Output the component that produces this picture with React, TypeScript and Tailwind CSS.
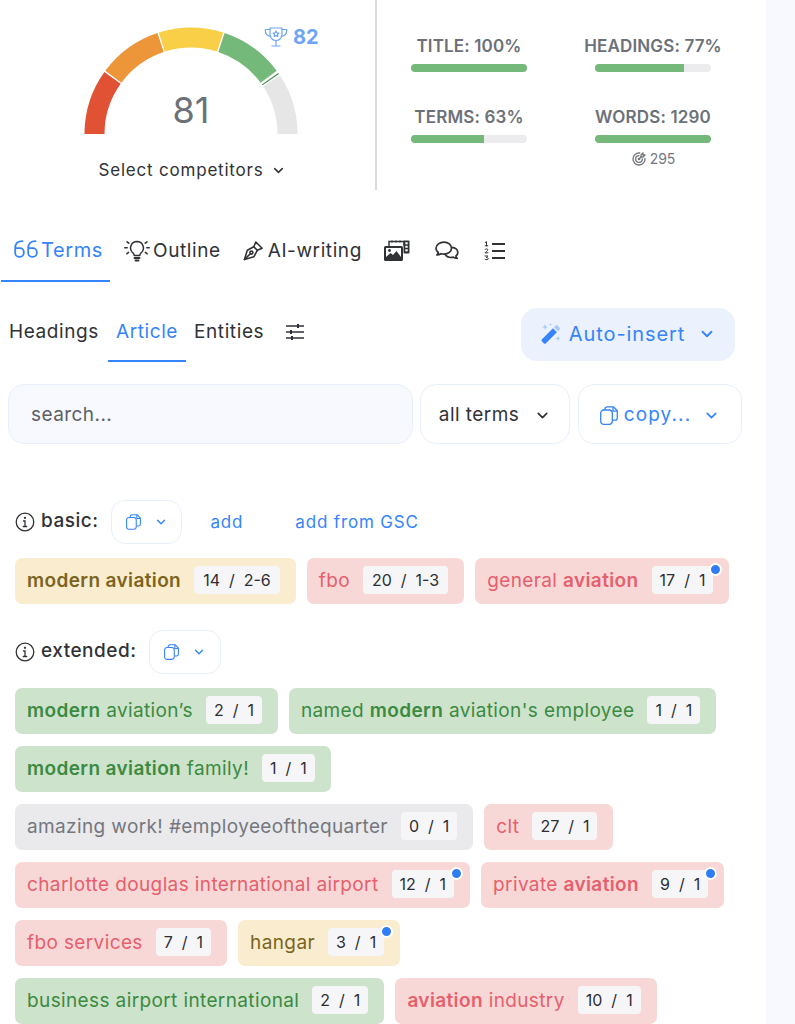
import React from 'react';
import { ChevronDown } from 'lucide-react';
import { TbTargetArrow } from 'react-icons/tb';

type Tone = 'yellow' | 'red' | 'green' | 'grey';

const toneClass: Record<Tone, string> = {
  yellow: 'bg-[#faecce] text-[#7a6420]',
  red: 'bg-[#f8d7d7] text-[#e5606c]',
  green: 'bg-[#cde3cb] text-[#3b8a41]',
  grey: 'bg-[#eaeaec] text-[#74777e]',
};

function polar(r: number, deg: number) {
  const a = (deg * Math.PI) / 180;
  return `${(110 + r * Math.cos(a)).toFixed(2)} ${(110 - r * Math.sin(a)).toFixed(2)}`;
}

function arc(from: number, to: number) {
  const R = 106.5;
  const r = 86.5;
  return `M${polar(R, from)} A${R} ${R} 0 0 1 ${polar(R, to)} L${polar(r, to)} A${r} ${r} 0 0 0 ${polar(r, from)} Z`;
}

function Gauge() {
  return (
    <svg width="220" height="110" viewBox="0 0 220 110" className="block">
      <path d={arc(180, 144.4)} fill="#e05233" />
      <path d={arc(143.6, 108.4)} fill="#ec9539" />
      <path d={arc(107.6, 72.4)} fill="#f9cf47" />
      <path d={arc(71.6, 36.4)} fill="#74b87a" />
      <path d={arc(33.4, 0)} fill="#e6e6e6" />
      <path d={`M${polar(106.5, 34.6)} L${polar(86.5, 34.6)}`} stroke="#3b8a41" strokeWidth="1.2" />
    </svg>
  );
}

function Trophy() {
  return (
    <svg width="24" height="20" viewBox="0 0 24 20" fill="none" stroke="#6ea5f5" strokeWidth="1.2" strokeLinejoin="round" strokeLinecap="round">
      <path d="M6 1h12v6.500a6 6 0 0 1-12 0z" />
      <path d="M6 2.500H1.200c0 4 1.800 6.500 5.600 7M18 2.500h4.800c0 4-1.800 6.500-5.600 7" />
      <path d="M12 13.500V18M8 19h8" />
      <path d="M12 4l.9 1.800 2 .3-1.400 1.400.3 2-1.800-.9-1.800.9.3-2-1.400-1.400 2-.3z" />
    </svg>
  );
}

function CopyIcon({ size = 18 }: { size?: number }) {
  return (
    <svg width={size} height={size + 1} viewBox="0 0 18 19" fill="none" stroke="#3584fb" strokeWidth="1.3" strokeLinejoin="round">
      <rect x="0.700" y="4" width="11.600" height="14.300" rx="3" />
      <path d="M5 4V3a2.200 2.200 0 0 1 2.200-2.200h6.100l4 4V12a2.200 2.200 0 0 1-2.200 2.200h-2.800" />
      <path d="M13 1v4.200h4.200" />
    </svg>
  );
}

function QuoteIcon() {
  return (
    <svg width="24" height="18" viewBox="0 0 24 18" fill="none" stroke="#3584fb" strokeWidth="1.800" strokeLinejoin="round" strokeLinecap="round">
      <path d="M8.500 1.200C4 1.200 1.200 3.500 1.200 8v5a3.800 3.800 0 0 0 3.800 3.800h1A3.800 3.800 0 0 0 9.800 13v-1a3.800 3.800 0 0 0-3.800-3.800H1.200" />
      <path d="M21.500 1.200c-4.500 0-7.300 2.300-7.300 6.800v5a3.800 3.800 0 0 0 3.800 3.800h1a3.800 3.800 0 0 0 3.800-3.800v-1a3.800 3.800 0 0 0-3.800-3.800h-4.800" />
    </svg>
  );
}

function BulbIcon() {
  return (
    <svg width="26" height="22" viewBox="0 0 26 22" fill="none" stroke="#303236" strokeWidth="1.500" strokeLinecap="round" strokeLinejoin="round">
      <path d="M13 1.500a6.500 6.500 0 0 0-3.800 11.700c.7.6 1 1.300 1 2.300h5.600c0-1 .3-1.700 1-2.300A6.500 6.500 0 0 0 13 1.500z" />
      <path d="M10.500 18h5M11.500 20.500h3" strokeWidth="1.900" />
      <path d="M3 1.800l1.800 1.400M.8 7.800h2.400M2.800 13.800l1.800-1.400M23 1.800l-1.800 1.400M25.200 7.800h-2.400M23.200 13.800l-1.800-1.400" />
    </svg>
  );
}

function PenIcon() {
  return (
    <svg width="21" height="21" viewBox="0 0 21 21" fill="none" stroke="#303236" strokeWidth="1.600" strokeLinejoin="round" strokeLinecap="round">
      <path d="M1.500 19.500l2.800-9.300 6.500-3.400 3.500 3.500-3.400 6.500z" />
      <path d="M1.500 19.500l5.800-5.800" />
      <circle cx="8.400" cy="12.600" r="1.500" />
      <path d="M10.800 6.800l2-4.800 6.300 6.300-4.800 2" />
    </svg>
  );
}

function MediaIcon() {
  return (
    <svg width="26" height="21" viewBox="0 0 26 21" className="block">
      <path d="M5 6V1.500h15v4" fill="none" stroke="#303236" strokeWidth="1.400" />
      <path d="M8 .5v2M12 .5v2M16 .5v2" stroke="#303236" strokeWidth="1.200" />
      <rect x="19.500" y="0.500" width="6" height="13" rx="1" fill="#303236" />
      <rect x="21.300" y="2.300" width="2.400" height="2" fill="#fff" />
      <rect x="21.300" y="5.800" width="2.400" height="2" fill="#fff" />
      <rect x="21.300" y="9.300" width="2.400" height="2" fill="#fff" />
      <rect x="0" y="6" width="19" height="15" rx="1.500" fill="#303236" />
      <rect x="2" y="8" width="15" height="9" fill="#fff" />
      <circle cx="5.500" cy="10.500" r="1.400" fill="#303236" />
      <path d="M2 17l4.500-4 2.500 2 3.500-4 4.500 6z" fill="#303236" />
    </svg>
  );
}

function ChatIcon() {
  return (
    <svg width="24" height="20" viewBox="0 0 24 20" fill="none" stroke="#303236" strokeWidth="1.700" strokeLinejoin="round" strokeLinecap="round">
      <path d="M9 1.200c-4.300 0-8 2.500-8 6 0 1.700.9 3.200 2.300 4.300-.2 1-.8 1.800-1.500 2.500 1.700 0 3.100-.5 4.200-1.300 1 .3 1.900.4 3 .4 4.300 0 7.500-2.500 7.500-5.900s-3.200-6-7.500-6z" />
      <path d="M16.800 6.400c3.400.3 6 2.300 6 5 0 1.500-.7 2.700-1.900 3.600.1.900.6 1.700 1.300 2.400-1.600 0-2.900-.4-3.900-1.200-2.800.6-6.500-.1-8-2.600" />
    </svg>
  );
}

function ListIcon() {
  return (
    <svg width="21" height="20" viewBox="0 0 21 20" fill="none" stroke="#303236" strokeLinecap="round">
      <path d="M8 3h13M8 10h13M8 17h13" strokeWidth="1.900" strokeLinecap="butt" />
      <path d="M1.200 1.500l1.300-.8v4.100M1.200 4.800h2.600" strokeWidth="1" />
      <path d="M1 8.500c.5-1 2.800-1 2.800.3 0 1-1.800 1.700-2.800 3h3" strokeWidth="1" />
      <path d="M1 15h2.800L2.200 16.600c1.600-.2 2 .6 2 1.200 0 1-2.200 1.300-3.200.5" strokeWidth="1" />
    </svg>
  );
}

function SlidersIcon() {
  return (
    <svg width="18" height="18" viewBox="0 0 18 18" fill="none" stroke="#303236" strokeWidth="1.400">
      <path d="M0 3h18M0 9h18M0 15h18" />
      <path d="M12 1v4M5 7v4M6 13v4" strokeWidth="2" />
    </svg>
  );
}

function WandIcon() {
  return (
    <svg width="22" height="22" viewBox="0 0 22 22">
      <path d="M1.800 16.500L13 5.300l3.900 3.900L5.700 20.400a1.200 1.200 0 0 1-1.700 0l-2.200-2.200a1.200 1.200 0 0 1 0-1.700z" fill="#3584fb" />
      <path d="M14 4.300l1.800-1.800a1.200 1.200 0 0 1 1.700 0l2.200 2.200a1.200 1.200 0 0 1 0 1.700l-1.800 1.800z" fill="#a9c8fa" />
      <path d="M5 1l.8 2.200L8 4l-2.200.8L5 7l-.8-2.200L2 4l2.200-.8zM10.500 0l.4 1.100 1.100.4-1.100.4-.4 1.100-.4-1.100L9 1.500l1.100-.4zM18 13l.7 1.800 1.800.7-1.800.7L18 18l-.7-1.800-1.800-.7 1.800-.7z" fill="#a9c8fa" />
    </svg>
  );
}

function InfoIcon() {
  return (
    <svg width="20" height="20" viewBox="0 0 20 20" fill="none" stroke="#303236" strokeWidth="1.300" strokeLinecap="round">
      <circle cx="10" cy="10" r="8.800" />
      <path d="M8.500 9h1.500v5.500M8.300 14.500h3.400" />
      <circle cx="10" cy="5.800" r="0.500" fill="#303236" />
    </svg>
  );
}

function Stat({ label, pct, extra }: { label: string; pct: number; extra?: React.ReactNode }) {
  return (
    <div className="flex flex-col items-center w-[116px]">
      <div className="text-[17px] leading-[20px] font-semibold tracking-[0.15px] text-[#6c7178] whitespace-nowrap">{label}</div>
      <div className="mt-[8px] h-[8px] w-full rounded-full bg-[#ececee] overflow-hidden">
        <div className="h-full bg-[#74b87a]" style={{ width: `${pct}%` }} />
      </div>
      {extra}
    </div>
  );
}

function CountChip({ text, dot, wide }: { text: string; dot?: boolean; wide?: boolean }) {
  return (
    <span className={`relative mb-[2px] ml-[13px] flex h-[28px] items-center rounded-[4px] bg-[#f6f6f8] pb-[1px] text-[16px] tracking-normal whitespace-pre text-[#2c2e33] ${wide ? 'px-[9px]' : 'px-[8px]'}`}>
      {text}
      {dot && (
        <span className="absolute -right-[9px] -top-[3px] size-[13px] rounded-full border-[2px] border-white bg-[#2f7df6]" />
      )}
    </span>
  );
}

function Term({ tone, count, dot, wide, children }: { tone: Tone; count: string; dot?: boolean; wide?: boolean; children: React.ReactNode }) {
  return (
    <div className={`flex h-[46px] items-center rounded-[7px] pl-[12px] pr-[16px] text-[19px] tracking-[0.38px] whitespace-nowrap ${toneClass[tone]}`}>
      <span>{children}</span>
      <CountChip text={count} dot={dot} wide={wide} />
    </div>
  );
}

function SmallCopy({ className }: { className: string }) {
  return (
    <button className={`flex h-[44px] w-[71px] items-center justify-center gap-[13px] rounded-[14px] border border-[#e8effc] bg-white ${className}`}>
      <CopyIcon size={15} />
      <ChevronDown size={14} strokeWidth={2.4} color="#3584fb" />
    </button>
  );
}

export default function App() {
  return (
    <div className="flex h-[1024px] w-[795px] overflow-hidden bg-white font-['Inter',sans-serif] text-[#303236]">
      <div className="w-[766px] shrink-0">
        {/* score header */}
        <div className="flex h-[190px]">
          <div className="w-[377px] shrink-0 border-r-2 border-[#d8dada] pt-[24px]">
            <div className="relative ml-[81px] h-[110px] w-[220px]">
              <Gauge />
              <div className="absolute bottom-[2px] left-0 right-0 text-center text-[36px] leading-[44px] text-[#6c7178]">81</div>
              <div className="absolute left-[183px] -top-[2px] flex items-center gap-[5px]">
                <Trophy />
                <span className="text-[20px] font-bold text-[#6ea5f5]">82</span>
              </div>
            </div>
            <div className="mt-[25px] flex items-center justify-center gap-[7px] pl-[9px] text-[17px] leading-[22px] tracking-[0.8px]">
              Select competitors
              <ChevronDown size={15} strokeWidth={2.4} />
            </div>
          </div>
          <div className="grid grid-cols-[116px_116px] grid-rows-[71px_auto] gap-x-[68px] pl-[34px] pt-[36px] content-start">
            <Stat label="TITLE: 100%" pct={100} />
            <Stat label="HEADINGS: 77%" pct={77} />
            <Stat label="TERMS: 63%" pct={63} />
            <Stat
              label="WORDS: 1290"
              pct={100}
              extra={
                <div className="mt-[7px] flex items-center gap-[3px] text-[14px] leading-[18px] text-[#74777e]">
                  <TbTargetArrow size={16} />
                  295
                </div>
              }
            />
          </div>
        </div>

        {/* main tabs */}
        <div className="mt-[30px] flex h-[62px] pl-[1px] text-[19px] tracking-[0.6px]">
          <div className="flex h-full w-[109px] items-start gap-[3px] border-b-2 border-[#3584fb] pl-[13px] pt-[20px] text-[20px] text-[#3584fb]">
            <QuoteIcon />
            <span className="leading-[21px]">Terms</span>
          </div>
          <div className="ml-[14px] flex items-start gap-[3px] pt-[20px]">
            <BulbIcon />
            <span className="leading-[21px]">Outline</span>
          </div>
          <div className="ml-[22px] flex items-start gap-[4px] pt-[20px]">
            <PenIcon />
            <span className="leading-[21px]">AI-writing</span>
          </div>
          <div className="ml-[22px] flex items-start pt-[20px]">
            <MediaIcon />
          </div>
          <div className="ml-[25px] flex items-start pt-[21px]">
            <ChatIcon />
          </div>
          <div className="ml-[25px] flex items-start pt-[21px]">
            <ListIcon />
          </div>
        </div>

        {/* article sub-tabs */}
        <div className="mt-[26px] flex h-[54px] items-start pl-[9px] pr-[31px] text-[19px] tracking-[0.6px]">
          <span className="pt-[13px] leading-[22px]">Headings</span>
          <span className="ml-[9px] h-full w-[78px] border-b-2 border-[#3584fb] pt-[13px] text-center leading-[22px] text-[#3584fb]">Article</span>
          <span className="ml-[8px] pt-[13px] leading-[22px]">Entities</span>
          <span className="ml-[22px] pt-[15px]">
            <SlidersIcon />
          </span>
          <button className="ml-auto flex h-[53px] w-[214px] items-center justify-center gap-[7px] rounded-[16px] bg-[#ebf1fd] pb-[1px] text-[20px] tracking-[0.9px] text-[#3584fb]">
            <WandIcon />
            Auto-insert
            <ChevronDown size={18} strokeWidth={2.4} className="ml-[6px]" />
          </button>
        </div>

        {/* search row */}
        <div className="mt-[22px] flex h-[60px] gap-[7px] pl-[8px] text-[19px] tracking-[0.44px]">
          <div className="flex w-[405px] items-center rounded-[16px] border border-[#e8effc] bg-[#f8f9fe] pl-[22px] pt-[2px] text-[#5c5f66]">search...</div>
          <button className="flex w-[150px] items-center justify-center gap-[15px] rounded-[16px] border border-[#e8effc] bg-white pt-[2px]">
            all terms
            <ChevronDown size={17} strokeWidth={2.4} />
          </button>
          <button className="ml-[1px] flex w-[164px] items-center justify-center gap-[6px] rounded-[16px] border border-[#e8effc] bg-white pt-[2px] tracking-[1.1px] text-[#3584fb]">
            <CopyIcon size={18} />
            copy...
            <ChevronDown size={17} strokeWidth={2.4} className="ml-[6px]" />
          </button>
        </div>

        {/* basic terms */}
        <div className="mt-[56px] flex h-[44px] items-center pl-[15px] text-[#3584fb]">
          <InfoIcon />
          <span className="ml-[6px] pb-[2px] text-[19px] font-medium tracking-[0.5px] text-[#303236]">basic:</span>
          <SmallCopy className="ml-[13px]" />
          <span className="ml-[28px] pt-[2px] text-[17px] tracking-[0.8px]">add</span>
          <span className="ml-[52px] pt-[2px] text-[17px] tracking-[0.85px]">add from GSC</span>
        </div>
        <div className="mt-[14px] flex flex-wrap gap-x-[11px] gap-y-[12px] pl-[15px] pr-[8px]">
          <Term tone="yellow" count="14  /  2-6" wide><b className="font-semibold">modern aviation</b></Term>
          <Term tone="red" count="20  /  1-3" wide>fbo</Term>
          <Term tone="red" count="17  /  1" dot>general <b className="font-semibold">aviation</b></Term>
        </div>

        {/* extended terms */}
        <div className="mt-[26px] flex h-[44px] items-center pl-[15px]">
          <InfoIcon />
          <span className="ml-[6px] pb-[2px] text-[19px] font-medium tracking-[0.5px]">extended:</span>
          <SmallCopy className="ml-[13px] w-[72px]" />
        </div>
        <div className="mt-[14px] flex flex-wrap gap-x-[11px] gap-y-[12px] pl-[15px] pr-[8px]">
          <Term tone="green" count="2  /  1"><b className="font-semibold">modern</b> aviation’s</Term>
          <Term tone="green" count="1  /  1">named <b className="font-semibold">modern</b> aviation's employee</Term>
          <Term tone="green" count="1  /  1"><b className="font-semibold">modern aviation</b> family!</Term>
          <Term tone="grey" count="0  /  1">amazing work! #employeeofthequarter</Term>
          <Term tone="red" count="27  /  1">clt</Term>
          <Term tone="red" count="12  /  1" dot>charlotte douglas international airport</Term>
          <Term tone="red" count="9  /  1" dot>private <b className="font-semibold">aviation</b></Term>
          <Term tone="red" count="7  /  1">fbo services</Term>
          <Term tone="yellow" count="3  /  1" dot>hangar</Term>
          <Term tone="green" count="2  /  1">business airport international</Term>
          <Term tone="red" count="10  /  1"><b className="font-semibold">aviation</b> industry</Term>
        </div>
      </div>
      <div className="flex-1 bg-[#f8f9fe]" />
    </div>
  );
}
